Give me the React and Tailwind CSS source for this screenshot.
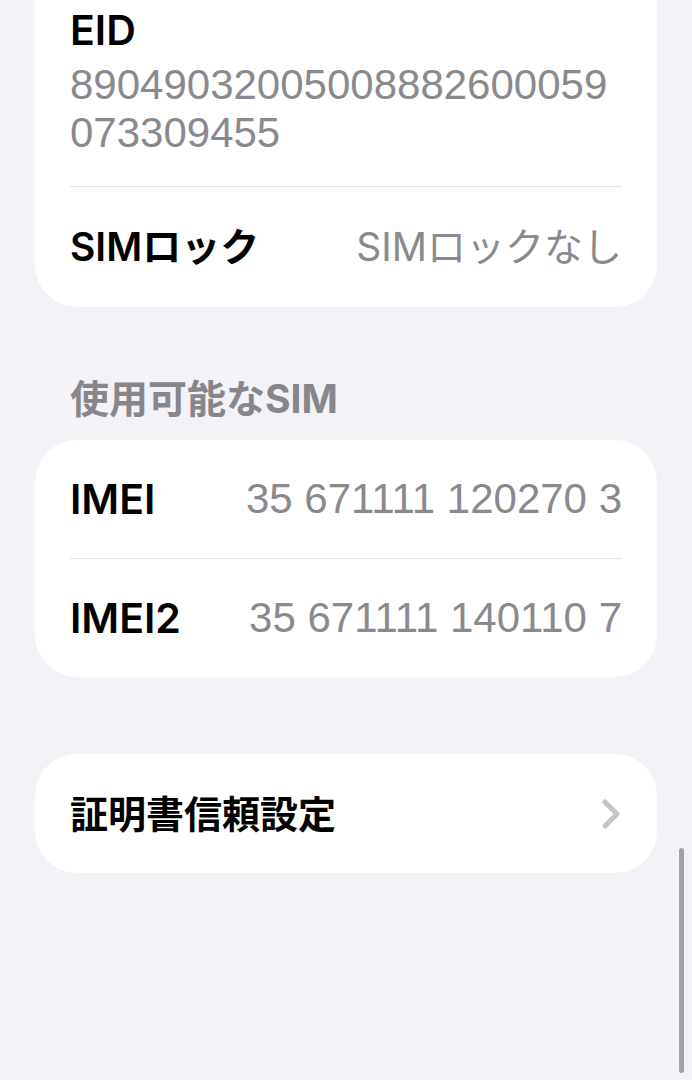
import React from 'react';

const FONT = { fontFamily: '"Inter", "Noto Sans CJK JP", sans-serif' };
const DIGITS = { fontFamily: '"Liberation Sans", "Inter", sans-serif' };

function Divider() {
  return <div className="h-px bg-[#e3e3e6]" />;
}

function Row({ label, value, numeric = true, labelClass = 'text-[41px]', valueClass = 'text-[42px]', height = 'h-[119px]', children }) {
  return (
    <div className={`flex items-center justify-between ${height}`}>
      <span className={`font-semibold text-black leading-[48px] ${labelClass}`}>{label}</span>
      {value && (
        <span className={`text-[#8a8a8e] leading-[48px] ${valueClass}`} style={numeric ? DIGITS : undefined}>
          {value}
        </span>
      )}
      {children}
    </div>
  );
}

function Chevron() {
  return (
    <svg width="20" height="30" viewBox="0 0 20 30" className="mr-[1px]">
      <polyline points="4,3 16,15 4,27" fill="none" stroke="#c4c4c7" strokeWidth="5" strokeLinecap="round" strokeLinejoin="round" />
    </svg>
  );
}

export default function App() {
  return (
    <div className="relative min-h-[1080px] w-[692px] overflow-hidden bg-[#f2f2f7] px-[35px]" style={FONT}>
      {/* SIM info card, top cut off by scroll */}
      <div className="rounded-b-[42px] bg-white px-[35px]">
        <div className="pt-[6px] pb-[29px]">
          <div className="text-[41px] font-semibold leading-[48px] text-black">EID</div>
          <div className="mt-[7px] text-[42px] leading-[48px] text-[#8a8a8e]" style={DIGITS}>
            <div>89049032005008882600059</div>
            <div>073309455</div>
          </div>
        </div>
        <Divider />
        <Row label="SIMロック" value="SIMロックなし" numeric={false} labelClass="text-[39px]" valueClass="text-[39px]" height="h-[120px]" />
      </div>

      {/* section header */}
      <div className="pt-[68px] pb-[17px] pl-[35px] text-[39px] font-bold leading-[48px] text-[#86868b]">
        使用可能なSIM
      </div>

      <div className="rounded-[42px] bg-white px-[35px]">
        <Row label="IMEI" value="35 671111 120270 3" height="h-[118px]" />
        <Divider />
        <Row label="IMEI2" value="35 671111 140110 7" height="h-[118px]" />
      </div>

      <div className="mt-[77px] rounded-[42px] bg-white px-[35px]">
        <Row label="証明書信頼設定" labelClass="text-[38px]" height="h-[119px]">
          <Chevron />
        </Row>
      </div>

      {/* scroll indicator */}
      <div className="absolute right-[8px] top-[848px] h-[225px] w-[5px] rounded-full bg-[#a1a1a6]" />
    </div>
  );
}
